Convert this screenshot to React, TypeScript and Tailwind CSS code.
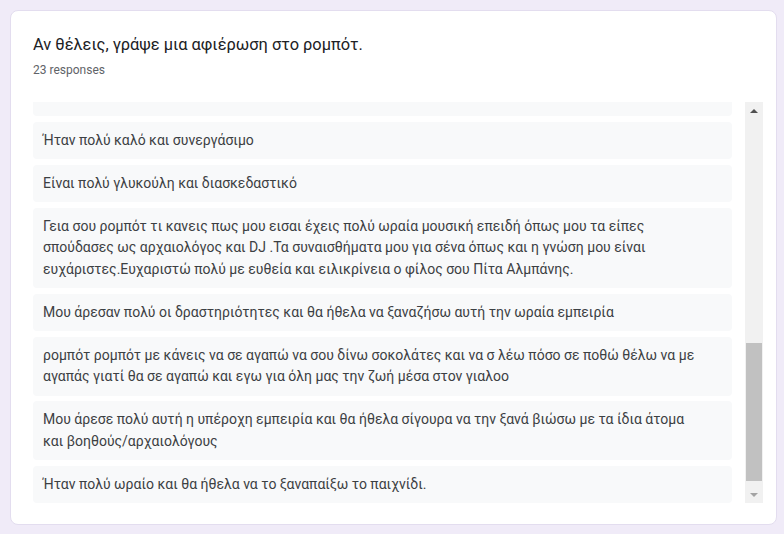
const responses: string[][] = [
  ["Ήταν πολύ καλό και συνεργάσιμο"],
  ["Είναι πολύ γλυκούλη και διασκεδαστικό"],
  [
    "Γεια σου ρομπότ τι κανεις πως μου εισαι έχεις πολύ ωραία μουσική επειδή όπως μου τα είπες",
    "σπούδασες ως αρχαιολόγος και DJ .Τα συναισθήματα μου για σένα όπως και η γνώση μου είναι",
    "ευχάριστες.Ευχαριστώ πολύ με ευθεία και ειλικρίνεια ο φίλος σου Πίτα Αλμπάνης.",
  ],
  ["Μου άρεσαν πολύ οι δραστηριότητες και θα ήθελα να ξαναζήσω αυτή την ωραία εμπειρία"],
  [
    "ρομπότ ρομπότ με κάνεις να σε αγαπώ να σου δίνω σοκολάτες και να σ λέω πόσο σε ποθώ θέλω να με",
    "αγαπάς γιατί θα σε αγαπώ και εγω για όλη μας την ζωή μέσα στον γιαλοο",
  ],
  [
    "Μου άρεσε πολύ αυτή η υπέροχη εμπειρία και θα ήθελα σίγουρα να την ξανά βιώσω με τα ίδια άτομα",
    "και βοηθούς/αρχαιολόγους",
  ],
  ["Ήταν πολύ ωραίο και θα ήθελα να το ξαναπαίξω το παιχνίδι."],
];

const Response = ({ lines }: { lines: string[] }) => (
  <div className="bg-[#f8f9fa] rounded-[4px] px-[10px] py-[8px] text-[14px] leading-[21.5px] text-[#3c4043] whitespace-nowrap">
    {lines.map((line, i) => (
      <div key={i}>{line}</div>
    ))}
  </div>
);

const Scrollbar = () => (
  <div className="w-[18px] h-full bg-[#f1f1f1] flex flex-col">
    <div className="h-[17px] flex items-center justify-center">
      <div className="w-0 h-0 border-l-[4px] border-r-[4px] border-b-[4px] border-l-transparent border-r-transparent border-b-[#505050]" />
    </div>
    <div className="flex-1 flex flex-col px-[1px]">
      <div className="mt-[224px] h-[138px] bg-[#c1c1c1]" />
    </div>
    <div className="h-[17px] flex items-center justify-center">
      <div className="w-0 h-0 border-l-[4px] border-r-[4px] border-t-[4px] border-l-transparent border-r-transparent border-t-[#a3a3a3]" />
    </div>
  </div>
);

export default function App() {
  return (
    <div
      className="w-[784px] h-[534px] bg-[#f0ebf8] pt-[10px] px-[10px]"
      style={{ fontFamily: "Roboto, 'Liberation Sans', sans-serif" }}
    >
      <div className="w-[767px] h-[515px] bg-white rounded-[8px] border border-[#e3ddef] pl-[22px] pr-[12px] pt-[22px] pb-[21px] flex flex-col">
        <h1 className="text-[16.4px] leading-[24px] text-[#202124]">
          Αν θέλεις, γράψε μια αφιέρωση στο ρομπότ.
        </h1>
        <p className="mt-[5px] text-[12px] leading-[16px] text-[#5f6368]">23 responses</p>
        <div className="mt-[24px] flex gap-[13px] h-[401px]">
          <div className="w-[699px] h-full overflow-hidden">
            <div className="flex flex-col gap-[5.5px]">
              {/* tail of the response scrolled out of view */}
              <div className="h-[14px] bg-[#f8f9fa] rounded-b-[4px]" />
              {responses.map((r, i) => (
                <Response key={i} lines={r} />
              ))}
            </div>
          </div>
          <Scrollbar />
        </div>
      </div>
    </div>
  );
}
